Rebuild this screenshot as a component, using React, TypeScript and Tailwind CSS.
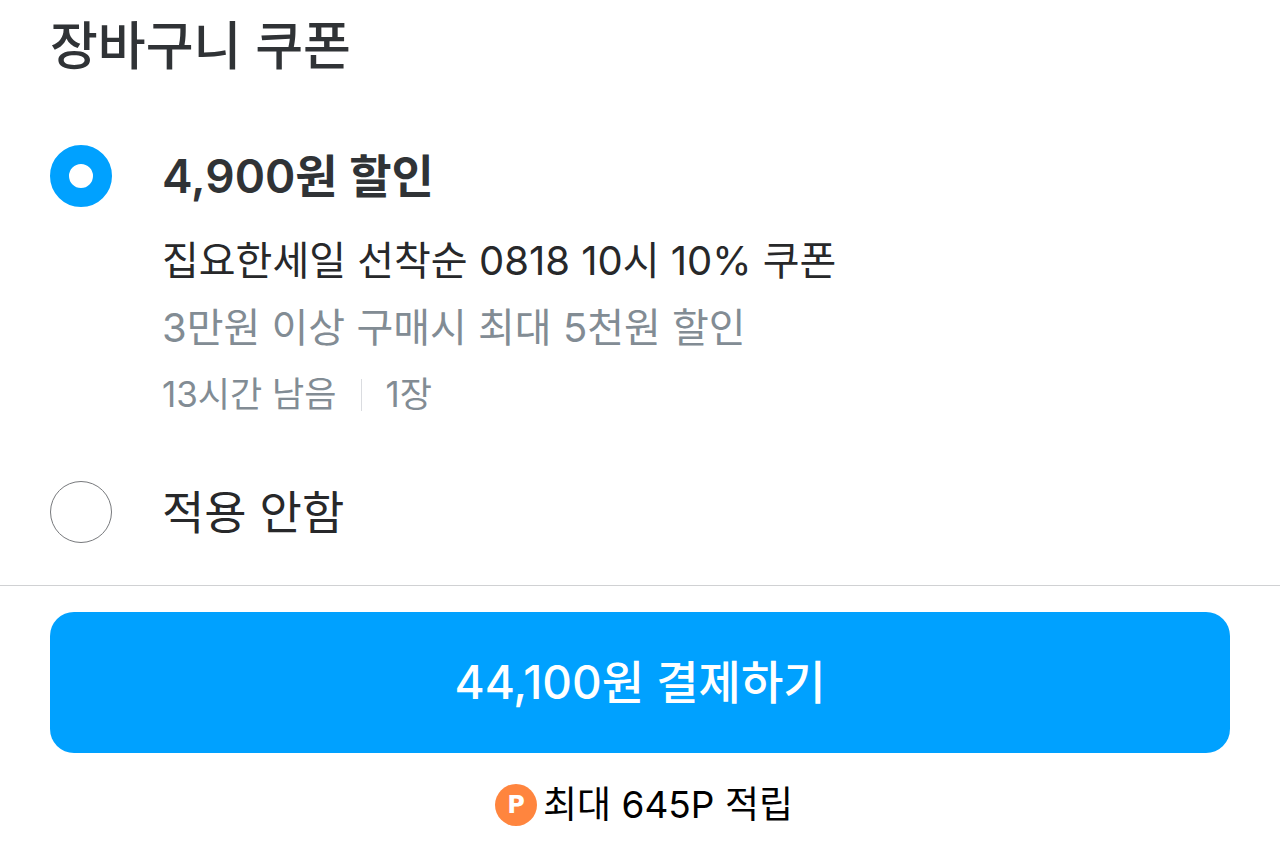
import { useState } from 'react';

const coupons = [
  {
    id: 'sale-0818',
    title: '4,900원 할인',
    name: '집요한세일 선착순 0818 10시 10% 쿠폰',
    condition: '3만원 이상 구매시 최대 5천원 할인',
    remaining: '13시간 남음',
    count: '1장',
  },
];

const radioClass =
  'size-[62px] shrink-0 cursor-pointer appearance-none rounded-full border border-[#77797c] bg-white checked:border-[19px] checked:border-[#00a1ff]';

function PointIcon() {
  return (
    <span
      aria-hidden="true"
      className="flex size-[42px] items-center justify-center rounded-full bg-[#ff853e] font-['DejaVu_Sans',sans-serif] text-[24px] leading-none font-bold text-white"
    >
      P
    </span>
  );
}

export default function App() {
  const [selected, setSelected] = useState('sale-0818');

  return (
    <main className="bg-white font-[Inter,'Noto_Sans_CJK_KR',sans-serif] text-[#27282a]">
      <section className="px-[50px] pt-[13px] pb-[42px]">
        <h1 className="text-[52px] leading-[68px] font-medium text-[#303336]">장바구니 쿠폰</h1>
        {coupons.map((coupon) => (
          <div key={coupon.id} className="mt-16 flex gap-[50px]">
            <input
              id={coupon.id}
              type="radio"
              name="coupon"
              checked={selected === coupon.id}
              onChange={() => setSelected(coupon.id)}
              className={radioClass}
            />
            <label htmlFor={coupon.id} className="flex cursor-pointer flex-col">
              <span className="text-[46px] leading-[62px] font-semibold text-[#303336]">
                {coupon.title}
              </span>
              <span className="mt-5 text-[40px] leading-[67px]">{coupon.name}</span>
              <span className="text-[40px] leading-[67px] text-[#828c94]">{coupon.condition}</span>
              <span className="flex items-center text-[35px] leading-[67px] text-[#828c94]">
                {coupon.remaining}
                <span className="mx-6 h-8 w-px bg-[#dadce0]" />
                {coupon.count}
              </span>
            </label>
          </div>
        ))}
        <div className="mt-[53px] flex gap-[50px]">
          <input
            id="none"
            type="radio"
            name="coupon"
            checked={selected === 'none'}
            onChange={() => setSelected('none')}
            className={radioClass}
          />
          <label htmlFor="none" className="cursor-pointer text-[46px] leading-[62px]">
            적용 안함
          </label>
        </div>
      </section>
      <footer className="border-t border-[#d0d1d3] px-[50px] pt-[26px] pb-6">
        <button
          type="button"
          className="h-[141px] w-full cursor-pointer rounded-[24px] bg-[#00a1ff] text-[46px] font-medium text-white"
        >
          44,100원 결제하기
        </button>
        <p className="mt-5 flex items-center justify-center gap-1.5 pl-2 text-[37px] leading-[64px] text-black">
          <PointIcon />
          최대 645P 적립
        </p>
      </footer>
    </main>
  );
}
